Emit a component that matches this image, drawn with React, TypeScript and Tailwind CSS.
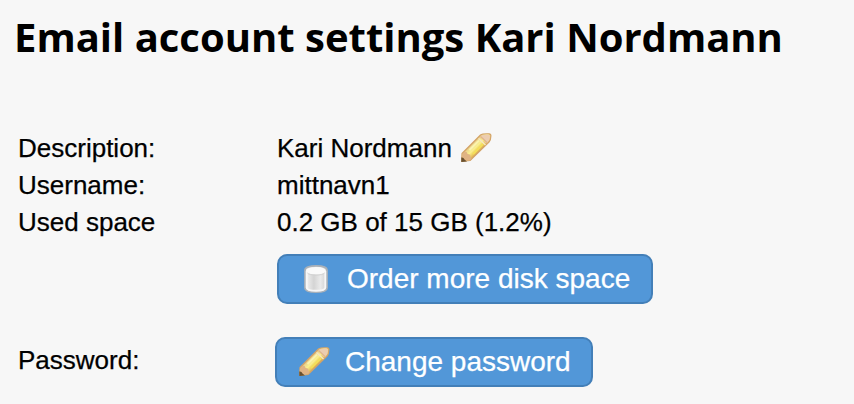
import { ReactNode } from "react";
import { clsx } from "clsx";

const PencilIcon = ({ className }: { className?: string }) => (
    <svg viewBox="0 0 32 32" className={className} aria-hidden="true">
        <defs>
            <linearGradient id="pencilBody" gradientUnits="userSpaceOnUse" x1="10" y1="10" x2="21" y2="21">
                <stop offset="0" stopColor="#d3a266" />
                <stop offset="0.3" stopColor="#f0dc90" />
                <stop offset="0.5" stopColor="#faf08c" />
                <stop offset="0.7" stopColor="#eccb62" />
                <stop offset="1" stopColor="#bf8442" />
            </linearGradient>
        </defs>
        <path
            d="M1.700 29.500L2 21.500L20.500 3Q22.500 1.500 29 1.800Q31.300 2 30.800 4.500Q30.800 8 29 10L10 28.500Z"
            fill="url(#pencilBody)"
            stroke="#d3a368"
            strokeWidth="1.200"
            strokeLinejoin="round"
        />
        <path d="M20.500 4Q23 2.300 28.500 2.500Q30.200 2.700 30 5Q30 8 28 10L26 11.500Z" fill="#eccdb0" />
        <path d="M20.500 4.500L27.500 11" stroke="#e2b68c" strokeWidth="1.500" />
        <path d="M18.500 6.500L25.500 13" stroke="#f5e6c4" strokeWidth="1.500" />
        <path d="M9.500 18L19 8.500" stroke="#fbf3ae" strokeWidth="2" />
        <path d="M13 22L23 12" stroke="#f4df58" strokeWidth="2.200" />
        <path d="M2.300 22L4.500 20Q7 19 7.500 22Q11 22 10.500 25Q13 25.500 10 28.300L2 29.300Z" fill="#e0b384" />
        <path d="M1.300 30V25.500Q3.500 25 4.500 27.500L7 29.500Z" fill="#69502f" />
    </svg>
);

const DiskIcon = ({ className }: { className?: string }) => (
    <svg viewBox="0 0 32 32" className={className} aria-hidden="true">
        <defs>
            <linearGradient id="diskBody">
                <stop offset="0" stopColor="#f6f6f6" />
                <stop offset="0.4" stopColor="#d4d4d4" />
                <stop offset="0.7" stopColor="#eaeaea" />
                <stop offset="1" stopColor="#cfcfcf" />
            </linearGradient>
        </defs>
        <path
            d="M5 7C5 1.500 27 1.500 27 7V25C27 30.500 5 30.500 5 25Z"
            fill="url(#diskBody)"
            stroke="#aab1b8"
            strokeWidth="1.800"
        />
        <path
            d="M6.700 8V24.500C6.700 28.800 25.300 28.800 25.300 24.500V8"
            fill="none"
            stroke="#f7f7f7"
            strokeWidth="1.900"
        />
        <ellipse cx="16" cy="7.800" rx="9.800" ry="3.800" fill="#fafafa" />
        <path d="M7.500 10C9 12.800 23 12.800 24.500 10" fill="none" stroke="#d2d2d2" />
    </svg>
);

const ActionButton = ({
    icon,
    className,
    children,
}: {
    icon: ReactNode;
    className?: string;
    children: ReactNode;
}) => (
    <button
        type="button"
        className={clsx(
            "flex h-[50px] items-center rounded-[10px] border-2 border-[#437fb8] bg-[#5297d8] pl-[21px] text-[28px] leading-8 whitespace-nowrap text-white",
            className
        )}
    >
        {icon}
        {children}
    </button>
);

const Row = ({ label, children }: { label: string; children: ReactNode }) => (
    <div className="flex h-[37px] items-center">
        <dt className="w-[259px] shrink-0">{label}</dt>
        <dd className="flex items-center whitespace-nowrap">{children}</dd>
    </div>
);

const App = () => {
    return (
        <main className="h-[404px] w-[854px] overflow-hidden bg-[#f7f7f7] pt-[9px] pl-[18px] font-['Liberation_Sans',Arial,sans-serif] text-[26px] leading-[30px] text-black [-webkit-text-stroke-width:0.25px]">
            <h1 className="-ml-1 h-[120px] font-['Open_Sans',sans-serif] text-[40px] leading-[56px] font-bold whitespace-nowrap [-webkit-text-stroke-width:0]">
                Email account settings Kari Nordmann
            </h1>
            <dl>
                <Row label="Description:">
                    Kari Nordmann
                    <PencilIcon className="ml-2 size-8" />
                </Row>
                <Row label="Username:">mittnavn1</Row>
                <Row label="Used space">0.2 GB of 15 GB (1.2%)</Row>
            </dl>
            <div className="mt-[14px] ml-[259px]">
                <ActionButton className="w-[376px]" icon={<DiskIcon className="mr-[15px] size-8" />}>
                    Order more disk space
                </ActionButton>
            </div>
            <div className="mt-[33px] flex h-[50px] items-center">
                <div className="w-[257px] shrink-0 pb-1">Password:</div>
                <ActionButton className="w-[318px]" icon={<PencilIcon className="mr-[15px] size-8" />}>
                    Change password
                </ActionButton>
            </div>
        </main>
    );
};

export default App;
